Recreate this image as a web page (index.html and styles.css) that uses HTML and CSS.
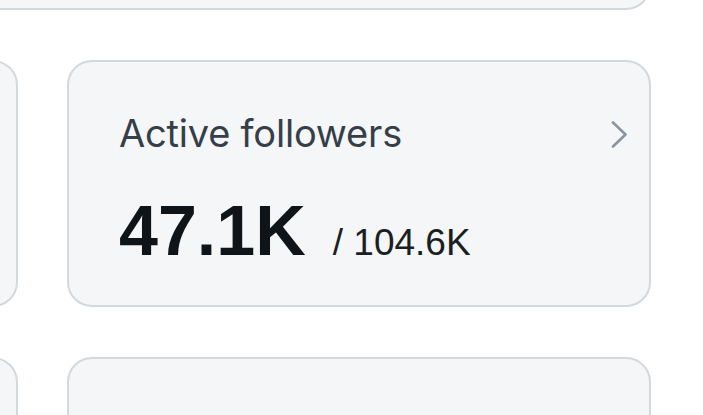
FILE: index.html
```html
<!DOCTYPE html>
<html>
  <head>
    <meta charset="UTF-8">
    <title>Audience stats</title>
    <link rel="stylesheet" href="styles.css">
  </head>
  <body>
    <div class="board">
      <div class="card card-wide"></div>

      <div class="row">
        <div class="card"></div>
        <a class="card stat" href="#">
          <div class="stat-head">
            <span class="stat-label">Active followers</span>
            <svg class="chevron" width="20" height="28" viewBox="0 0 20 28">
              <polyline points="4,1.5 16.5,13.5 4,25.5" fill="none" stroke="#8a95a1" stroke-width="2.6" stroke-linecap="round" stroke-linejoin="round"/>
            </svg>
          </div>
          <div class="stat-value">
            <span class="stat-main">47.1K</span>
            <span class="stat-total">/ 104.6K</span>
          </div>
        </a>
      </div>

      <div class="row">
        <div class="card"></div>
        <div class="card"></div>
      </div>
    </div>
  </body>
</html>
```

FILE: styles.css
```css
body {
  margin: 0;
  background: #fff;
  font-family: Inter, 'Noto Sans', sans-serif;
  overflow: hidden;
}

.board {
  margin: -100px 0 0 -200px;
  width: 851px;
  display: flex;
  flex-direction: column;
  gap: 50px;
}

.card {
  box-sizing: border-box;
  background: #f5f6f8;
  border: 2px solid #d3d8dd;
  border-radius: 25px;
  height: 247px;
}

.card-wide {
  height: 110px;
}

.row {
  display: grid;
  grid-template-columns: 218px 584px;
  gap: 49px;
}

.stat {
  display: block;
  padding: 47px 20px 0 50px;
  color: inherit;
  text-decoration: none;
}

.stat-head {
  display: flex;
  align-items: center;
  justify-content: space-between;
}

.stat-label {
  font-size: 38px;
  line-height: 48px;
  color: #353e49;
  letter-spacing: -0.2px;
}

.chevron {
  display: block;
  margin-top: 4px;
}

.stat-value {
  margin-top: 39px;
  display: flex;
  align-items: baseline;
}

.stat-main {
  font-family: 'Liberation Sans', Arial, sans-serif;
  font-weight: bold;
  font-size: 70px;
  line-height: 70px;
  color: #0f1419;
}

.stat-total {
  margin-left: 27px;
  font-family: 'Liberation Sans', Arial, sans-serif;
  font-size: 37px;
  color: #1a1f24;
}
```
